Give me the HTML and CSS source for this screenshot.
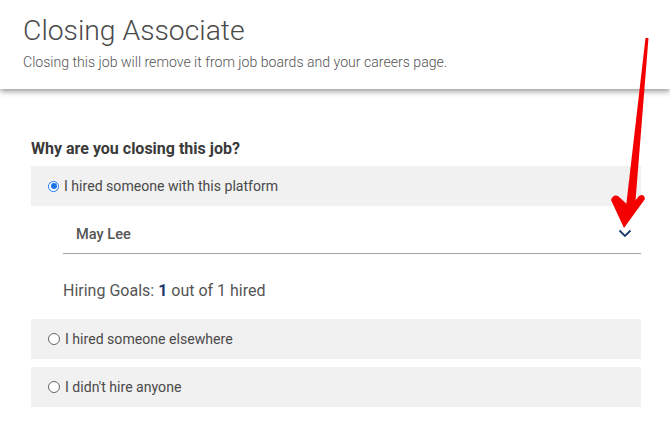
FILE: index.html
```html
<!DOCTYPE html>
<html>
<head>
<meta charset="utf-8">
<link rel="stylesheet" href="styles.css">
</head>
<body>
<header class="head">
  <h1 class="title">Closing Associate</h1>
  <p class="sub">Closing this job will remove it from job boards and your careers page.</p>
</header>
<main class="main">
  <h2 class="question">Why are you closing this job?</h2>
  <label class="option"><span class="radio on"></span>I hired someone with this platform</label>
  <div class="nested">
    <div class="select">
      <span class="select-text">May Lee</span>
      <svg class="chev" width="14" height="9" viewBox="0 0 14 9"><path d="M1.5 1.5 L7 7 L12.5 1.5" fill="none" stroke="#1d3a6d" stroke-width="1.8"/></svg>
    </div>
    <p class="goals">Hiring Goals: <b class="num">1</b> out of 1 hired</p>
  </div>
  <label class="option"><span class="radio"></span>I hired someone elsewhere</label>
  <label class="option"><span class="radio"></span>I didn't hire anyone</label>
</main>
<svg class="arrow" width="60" height="200" viewBox="600 30 60 200">
  <path d="M645.5 38 L648.5 38 L635 207 L626 207 Z" fill="#f50000"/>
  <path d="M611 200 Q613 194 618 196 L630 207 L639 196 Q644 193 645 199 L624 228 Z" fill="#f50000"/>
</svg>
</body>
</html>
```
FILE: styles.css
```css
html, body { margin: 0; padding: 0; background: #fff; }
body { font-family: Roboto, "Liberation Sans", sans-serif; color: #444; position: relative; width: 670px; height: 423px; overflow: hidden; }
.head { height: 89px; box-sizing: border-box; padding: 14px 23px 0; background: #fff; box-shadow: 0 2px 6px rgba(0,0,0,0.45); position: relative; }
.title { margin: 0; font-weight: 300; font-size: 28.3px; line-height: 34px; color: #4a4a4a; }
.sub { margin: 5px 0 0; font-weight: 300; font-size: 14.1px; line-height: 18px; color: #555; }
.main { padding: 50px 29px 0 31px; }
.question { margin: 0 0 8px; font-size: 16px; font-weight: 700; color: #3a3a3a; line-height: 19px; }
.option { display: flex; align-items: center; height: 40px; background: #f1f1f1; padding-left: 17px; font-size: 14.1px; color: #4a4a4a; margin-bottom: 8px; }
.radio { width: 10px; height: 10px; border: 1px solid #666; border-radius: 50%; margin-right: 5px; box-sizing: content-box; background: #fff; }
.radio.on { border: 1.5px solid #1a73e8; width: 9px; height: 9px; position: relative; }
.radio.on::after { content: ""; position: absolute; left: 1.5px; top: 1.5px; width: 6px; height: 6px; border-radius: 50%; background: #1a73e8; }
.option + .nested { margin-top: -8px; }
.nested { padding-left: 32px; }
.select { display: flex; align-items: flex-end; justify-content: space-between; height: 48px; box-sizing: border-box; padding: 0 9px 10px 13px; border-bottom: 1px solid #a5a5a5; }
.select-text { font-size: 14.6px; font-weight: 500; color: #555; line-height: 18px; }
.chev { margin-bottom: 5px; }
.goals { margin: 28px 0 19px; font-size: 16px; color: #555; line-height: 18px; }
.num { color: #1d3a6d; font-weight: 700; }
.arrow { position: absolute; left: 600px; top: 30px; }
```
